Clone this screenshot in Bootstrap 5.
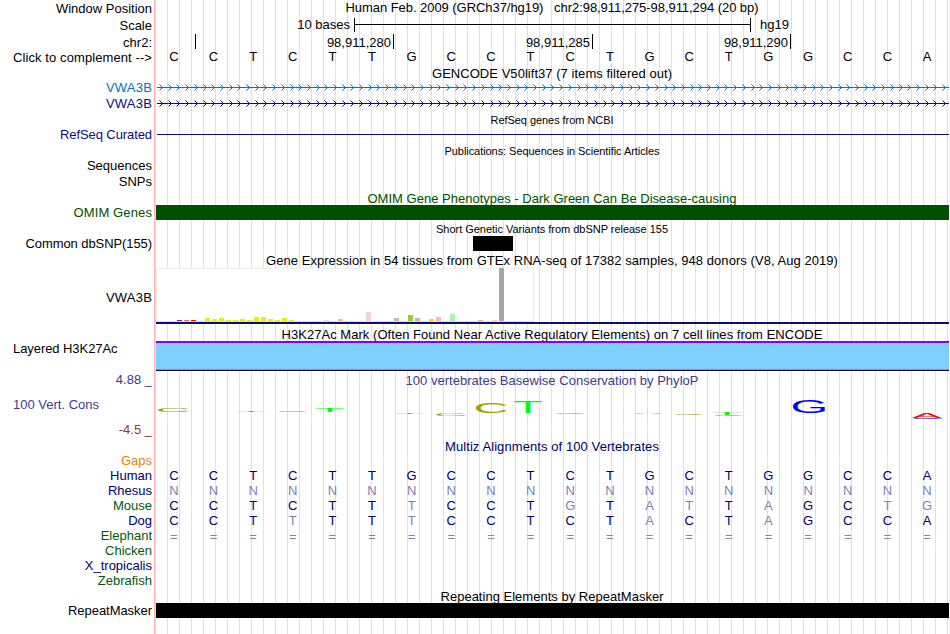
<!DOCTYPE html>
<html lang="en">
<head>
  <meta charset="UTF-8" />
  <meta name="viewport" content="width=device-width, initial-scale=1.0"/>
  <title>Human hg19 chr2:98,911,275-98,911,294</title>
  <link rel="stylesheet" href="https://cdn.jsdelivr.net/npm/bootstrap@5.3.3/dist/css/bootstrap.min.css"/>
  <style>
    body {
      font-family: "Liberation Sans", Arial, sans-serif;
      font-size: 13px;
      line-height: 15px;
      color: #000;
      background: #fff;
    }
    /* white label column, red divider, then a guide line every 12px */
    .browser {
      width: 950px;
      height: 634px;
      background:
        linear-gradient(#fff, #fff) 0 0 / 154px 100% no-repeat,
        linear-gradient(#ffb4b4, #ffb4b4) 154px 0 / 1px 100% no-repeat,
        linear-gradient(to right, #dcdcff 1px, transparent 1px) 11px 0 / 12px 100% repeat-x;
    }
    .track-label { width: 152px; margin-right: 4px; flex: none; text-align: right; }
    .track-data { width: 793px; flex: none; }
    .track-left { text-align: left; padding-left: 13px; }
    .track-title { display: flex; justify-content: center; padding-right: 1px; }
    .small-title { font-size: 11px; line-height: 16px; }
    .tall { line-height: 17px; }
    .h14 { height: 14px; } .h15 { height: 15px; } .h16 { height: 16px; } .h17 { height: 17px; }

    .c-navy { color: #0c0c78; }
    .c-dark { color: #000064; }
    .c-blue { color: #0c72b4; }
    .c-green { color: #005000; }
    .c-species { color: #005a0a; }
    .c-gaps { color: #e6820a; }
    .c-cons { color: #3c3c8c; }
    .c-neg { color: #8c3c3c; }

    .scale-text { width: 194px; text-align: right; }
    .scale-bar { width: 397px; height: 14px; margin: 1px 9px 0 4px; border: solid #000; border-width: 0 1px; padding-top: 6px; }
    .scale-bar div { height: 1px; background: #000; }
    .pos { height: 15px; line-height: 17px; border-right: 1px solid #000; padding-right: 2px; text-align: right; }

    .bases { display: grid; grid-template-columns: repeat(20, 39.65px); margin-left: -2px; text-align: center; }
    .pale { color: #8080b4; }
    .item-bar { height: 15px; }
    .gene-line { height: 1px; background: #0c0c78; margin: 7px 0 0 1px; }

    .gtex-box { width: 378px; height: 54px; background: #fff; border: 1px solid #eee; border-bottom-color: #ddd; padding-left: 20px; }
    .gtex-box i { width: 5px; margin-right: 2px; flex: none; }
    .gtex-line { height: 2px; background: #0c0c78; }
    .histone { height: 30px; background: #80d0ff; border-top: 2px solid #8000ff; border-bottom: 1px solid #000040; box-shadow: inset 0 -1px #30b8c8; }
  </style>
</head>
<body>

<div class="browser overflow-hidden">
  <div class="d-flex h17">
    <div class="track-label tall">Window Position</div>
    <div class="track-data track-title"><span data-w="413">Human Feb. 2009 (GRCh37/hg19) &nbsp; chr2:98,911,275-98,911,294 (20 bp)</span></div>
  </div>
  <div class="d-flex h17">
    <div class="track-label tall">Scale</div>
    <div class="track-data d-flex">
      <div class="scale-text">10 bases</div>
      <div class="scale-bar"><div></div></div>
      <div>hg19</div>
    </div>
  </div>
  <div class="d-flex h15">
    <div class="track-label tall">chr2:</div>
    <div class="track-data d-flex">
      <div class="pos" style="width: 40px"></div>
      <div class="pos" style="width: 198px">98,911,280</div>
      <div class="pos" style="width: 199px">98,911,285</div>
      <div class="pos" style="width: 198px">98,911,290</div>
    </div>
  </div>
  <div class="d-flex h17">
    <div class="track-label tall"><span data-w="139">Click to complement --&gt;</span></div>
    <div class="track-data"><div class="bases" data-seq="CCTCTTGCCTCTGCTGGCCA"></div></div>
  </div>

  <!-- GENCODE -->
  <div class="d-flex h14">
    <div class="track-label"></div>
    <div class="track-data track-title"><span data-w="240">GENCODE V50lift37 (7 items filtered out)</span></div>
  </div>
  <div class="d-flex h16 c-blue">
    <div class="track-label"><span data-w="46">VWA3B</span></div>
    <svg class="track-data barbs" height="15" stroke="#0c72b4"></svg>
  </div>
  <div class="d-flex h16 c-navy">
    <div class="track-label"><span data-w="46">VWA3B</span></div>
    <svg class="track-data barbs" height="15" stroke="#0c0c78"></svg>
  </div>

  <!-- RefSeq -->
  <div class="d-flex h15">
    <div class="track-label"></div>
    <div class="track-data track-title small-title"><span data-w="123">RefSeq genes from NCBI</span></div>
  </div>
  <div class="d-flex h16">
    <div class="track-label c-navy"><span data-w="92">RefSeq Curated</span></div>
    <div class="track-data"><div class="gene-line"></div></div>
  </div>

  <!-- Publications -->
  <div class="d-flex h15">
    <div class="track-label"></div>
    <div class="track-data track-title small-title"><span data-w="215">Publications: Sequences in Scientific Articles</span></div>
  </div>
  <div class="d-flex h16"><div class="track-label">Sequences</div></div>
  <div class="d-flex h17"><div class="track-label">SNPs</div></div>

  <!-- OMIM -->
  <div class="d-flex h14 c-green">
    <div class="track-label"></div>
    <div class="track-data track-title"><span data-w="369">OMIM Gene Phenotypes - Dark Green Can Be Disease-causing</span></div>
  </div>
  <div class="d-flex h16">
    <div class="track-label c-green"><span data-w="78.5">OMIM Genes</span></div>
    <div class="track-data item-bar" style="background: #005000"></div>
  </div>

  <!-- dbSNP -->
  <div class="d-flex h15">
    <div class="track-label"></div>
    <div class="track-data track-title small-title"><span data-w="232">Short Genetic Variants from dbSNP release 155</span></div>
  </div>
  <div class="d-flex h17">
    <div class="track-label"><span data-w="126.5">Common dbSNP(155)</span></div>
    <div class="track-data d-flex justify-content-center"><div class="item-bar bg-black" style="width: 40px; margin-right: 119px"></div></div>
  </div>

  <!-- GTEx -->
  <div class="d-flex h15">
    <div class="track-label"></div>
    <div class="track-data track-title"><span data-w="572">Gene Expression in 54 tissues from GTEx RNA-seq of 17382 samples, 948 donors (V8, Aug 2019)</span></div>
  </div>
  <div class="d-flex" style="height: 59px">
    <div class="track-label" style="padding-top: 22px"><span data-w="46">VWA3B</span></div>
    <div class="track-data">
      <div class="gtex-box d-flex align-items-end" id="gtex"></div>
      <div class="gtex-line"></div>
    </div>
  </div>

  <!-- H3K27Ac -->
  <div class="d-flex h14">
    <div class="track-label"></div>
    <div class="track-data track-title"><span data-w="541">H3K27Ac Mark (Often Found Near Active Regulatory Elements) on 7 cell lines from ENCODE</span></div>
  </div>
  <div class="d-flex" style="height: 32px">
    <div class="track-label track-left"><span data-w="104.5">Layered H3K27Ac</span></div>
    <div class="track-data histone"></div>
  </div>

  <!-- PhyloP -->
  <div class="d-flex c-cons" style="height: 66px">
    <div class="track-label d-flex flex-column" style="margin-top: -1px">
      <div>4.88 _</div>
      <div class="track-left" style="padding-top: 10px">100 Vert. Cons</div>
      <div class="c-neg" style="padding-top: 10px">-4.5 _</div>
    </div>
    <div class="track-data">
      <div class="track-title"><span data-w="293">100 vertebrates Basewise Conservation by PhyloP</span></div>
      <svg class="d-block" id="logo" width="793" height="51" viewBox="156 388 793 51" font-size="10"></svg>
    </div>
  </div>

  <!-- Multiz -->
  <div class="d-flex h14 c-dark">
    <div class="track-label"></div>
    <div class="track-data track-title"><span data-w="214">Multiz Alignments of 100 Vertebrates</span></div>
  </div>
  <div class="d-flex h15"><div class="track-label c-gaps">Gaps</div></div>
  <div class="d-flex h15 c-dark">
    <div class="track-label">Human</div>
    <div class="track-data"><div class="bases" data-seq="CCTCTTGCCTCTGCTGGCCA"></div></div>
  </div>
  <div class="d-flex h15 c-dark">
    <div class="track-label">Rhesus</div>
    <div class="track-data"><div class="bases" data-seq="nnnnnnnnnnnnnnnnnnnn"></div></div>
  </div>
  <div class="d-flex h15">
    <div class="track-label c-species">Mouse</div>
    <div class="track-data c-dark"><div class="bases" data-seq="CCTCTTtCCTgTatTaGCtg"></div></div>
  </div>
  <div class="d-flex h15 c-dark">
    <div class="track-label">Dog</div>
    <div class="track-data"><div class="bases" data-seq="CCTtTTtCCTCTaCTaGCCA"></div></div>
  </div>
  <div class="d-flex h15">
    <div class="track-label c-species">Elephant</div>
    <div class="track-data tall"><div class="bases" data-seq="===================="></div></div>
  </div>
  <div class="d-flex h15"><div class="track-label c-species">Chicken</div></div>
  <div class="d-flex h15"><div class="track-label c-dark">X_tropicalis</div></div>
  <div class="d-flex h16"><div class="track-label c-species">Zebrafish</div></div>

  <!-- RepeatMasker -->
  <div class="d-flex h14">
    <div class="track-label"></div>
    <div class="track-data track-title"><span data-w="223">Repeating Elements by RepeatMasker</span></div>
  </div>
  <div class="d-flex h15">
    <div class="track-label"><span data-w="84">RepeatMasker</span></div>
    <div class="track-data item-bar bg-black"></div>
  </div>
</div>

<script src="https://cdn.jsdelivr.net/npm/bootstrap@5.3.3/dist/js/bootstrap.bundle.min.js"></script>
<script>
  // Spread each title or label over its pixel width
  document.querySelectorAll("[data-w]").forEach(el => {
    el.style.whiteSpace = "nowrap";
    const extra = el.dataset.w - el.getBoundingClientRect().width;
    el.style.letterSpacing = (extra / el.textContent.length) + "px";
  });

  // Lower case (and "=") means the base differs or is unknown, drawn pale
  document.querySelectorAll("[data-seq]").forEach(el => {
    el.innerHTML = [...el.dataset.seq].map(b =>
      `<span class="${/[A-Z]/.test(b) ? "" : "pale"}">${b.toUpperCase()}</span>`).join("");
  });

  // Intron lines with direction barbs
  document.querySelectorAll(".barbs").forEach(svg => {
    let d = "M1 7.5H793";
    for (let x = 3; x < 790; x += 8.7) {
      const px = Math.round(x) + 0.5;
      d += `M${px} 4.5l3 3l-3 3`;
    }
    svg.innerHTML = `<path d="${d}" fill="none" stroke-width="1"/>`;
  });

  // GTEx tissues: slot number, height, colour
  const tissues = [
    [3, 1, "#8b1c62"], [4, 1, "#ee6a50"], [5, 1, "#ff0000"],
    [7, 3, "#eeee00"], [8, 2, "#eeee00"], [9, 3, "#eeee00"], [10, 1, "#eeee00"], [11, 1, "#eeee00"],
    [12, 2, "#eeee00"], [13, 1, "#eeee00"], [14, 4, "#eeee00"], [15, 4, "#eeee00"], [16, 2, "#eeee00"],
    [17, 1, "#eeee00"], [18, 3, "#eeee00"], [19, 1, "#eeee00"],
    [24, 1, "#eed5d2"], [26, 2, "#eec591"], [30, 9, "#eed5d2"], [34, 3, "#cdb79e"],
    [36, 6, "#9acd32"], [37, 3, "#cdb79e"], [39, 2, "#ffd700"], [40, 4, "#ffb6c1"],
    [42, 7, "#b4eeb4"], [46, 1, "#cdb79e"], [48, 1, "#ffd39b"], [49, 53, "#a6a6a6"]
  ];
  let bars = "";
  for (let i = 3; i < 50; i++) {
    const t = tissues.find(t => t[0] === i) || [i, 0, "#fff"];
    bars += `<i style="height:${t[1]}px;background:${t[2]}"></i>`;
  }
  document.getElementById("gtex").innerHTML = bars;

  // Conservation logo: base, left, top, width, height
  // ink: left edge, width, height and descent of each glyph at 10px
  const ink = { A: [0.03, 6.64, 6.9, 0], C: [0.5, 6.38, 7.1, 0.1], G: [0.5, 6.8, 7.1, 0.1], T: [0.2, 5.7, 6.9, 0] };
  const fills = { A: "#ff0000", C: "#a0a000", G: "#0000ff", T: "#00ff00" };
  const logo = [
    ["C", 158, 408, 31, 4], ["T", 237, 411, 28, 1], ["C", 278, 411, 29, 1], ["T", 316, 408, 28, 4],
    ["T", 396, 413, 27, 1], ["C", 436, 413, 30, 3], ["C", 476, 402, 31, 11], ["T", 514, 402, 28, 11],
    ["C", 556, 413, 30, 1], ["A", 634, 413, 29, 1], ["C", 675, 413.2, 29, 1.5], ["T", 713, 413, 28, 2],
    ["C", 715, 415, 28, 0.7], ["G", 793, 400, 33, 13], ["C", 913, 418.5, 27, 1], ["G", 913, 418, 31, 1],
    ["A", 912, 413, 30, 5]
  ];
  document.getElementById("logo").innerHTML = logo.map(([b, x, y, w, h]) => {
    const [left, width, height, descent] = ink[b];
    const sx = w / width, sy = h / height;
    return `<text fill="${fills[b]}" transform="translate(${x - left * sx} ${y + h - descent * sy}) scale(${sx} ${sy})">${b}</text>`;
  }).join("");
</script>
</body>
</html>
